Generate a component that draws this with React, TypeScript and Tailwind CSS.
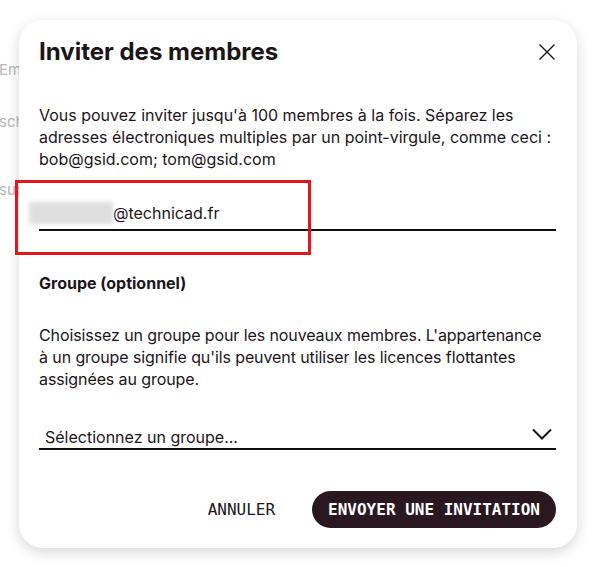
export default function App() {
  return (
    <div className="relative h-[567px] w-[597px] overflow-hidden bg-white font-['Inter',sans-serif] text-[#1c1519]">
      {/* page behind the dialog */}
      <div className="flex flex-col pt-[60px] text-[15px] leading-[20px] text-[#b8b8b8]">
        <span className="ml-[-1px]">Em</span>
        <span className="ml-[-1px] mt-[32px]">sch</span>
        <span className="ml-[-1px] mt-[48px]">sup</span>
      </div>

      {/* dialog */}
      <div className="absolute left-[19px] top-[20px] flex h-[528px] w-[558px] flex-col rounded-[24px] bg-white pl-[20px] pr-[21px] pt-[17px] shadow-[0_4px_14px_rgba(0,0,0,0.16)]">
        <div className="flex items-start justify-between">
          <h2 className="text-[24px] font-bold leading-[30px]">Inviter des membres</h2>
          <button className="mr-[1px] mt-[7px] text-[#1c1519]">
            <svg width="16" height="16" viewBox="0 0 16 16" fill="none" stroke="currentColor" strokeWidth="1.4">
              <path d="M0.5 0.5 15.5 15.5M15.5 0.5 0.5 15.5" />
            </svg>
          </button>
        </div>

        <p className="mt-[37px] text-[16px] leading-[22px]">
          Vous pouvez inviter jusqu'à 100 membres à la fois. Séparez les
          <br />
          adresses électroniques multiples par un point-virgule, comme ceci :
          <br />
          bob@gsid.com; tom@gsid.com
        </p>

        <div className="mt-[32px] flex items-center border-b-2 border-[#120d10] pb-[5px] text-[16px] leading-[22px]">
          <span className="ml-[-10px] inline-block h-[22px] w-[84px] bg-[#dedede] blur-[2px]" />
          <span>@technicad.fr</span>
        </div>

        <h3 className="mt-[41px] text-[16px] font-bold leading-[22px]">Groupe (optionnel)</h3>

        <p className="mt-[30px] text-[16px] leading-[22px] tracking-[-0.1px]">
          Choisissez un groupe pour les nouveaux membres. L'appartenance
          <br />
          à un groupe signifie qu'ils peuvent utiliser les licences flottantes
          <br />
          assignées au groupe.
        </p>

        <div className="mt-[35px] flex h-[25px] items-center justify-between border-b-2 border-[#120d10] pl-[6px] text-[16px] leading-[22px]">
          <span>Sélectionnez un groupe...</span>
          <svg
            width="20"
            height="12"
            viewBox="0 0 20 12"
            fill="none"
            stroke="currentColor"
            strokeWidth="2"
            className="mb-[6px] mr-[4px]"
          >
            <path d="M1 1.5 10 10.5 19 1.5" />
          </svg>
        </div>

        <div className="mt-[41px] flex items-center justify-end gap-[37px] font-['DejaVu_Sans_Mono',monospace] text-[16px]">
          <button className="text-[#1c1519]">ANNULER</button>
          <button className="h-[37px] rounded-full bg-[#2a1821] px-[16px] font-bold text-white">
            ENVOYER UNE INVITATION
          </button>
        </div>
      </div>

      {/* highlight annotation */}
      <div className="absolute left-[15px] top-[180px] h-[75px] w-[296px] border-[3px] border-[#e3161b]" />
    </div>
  );
}
